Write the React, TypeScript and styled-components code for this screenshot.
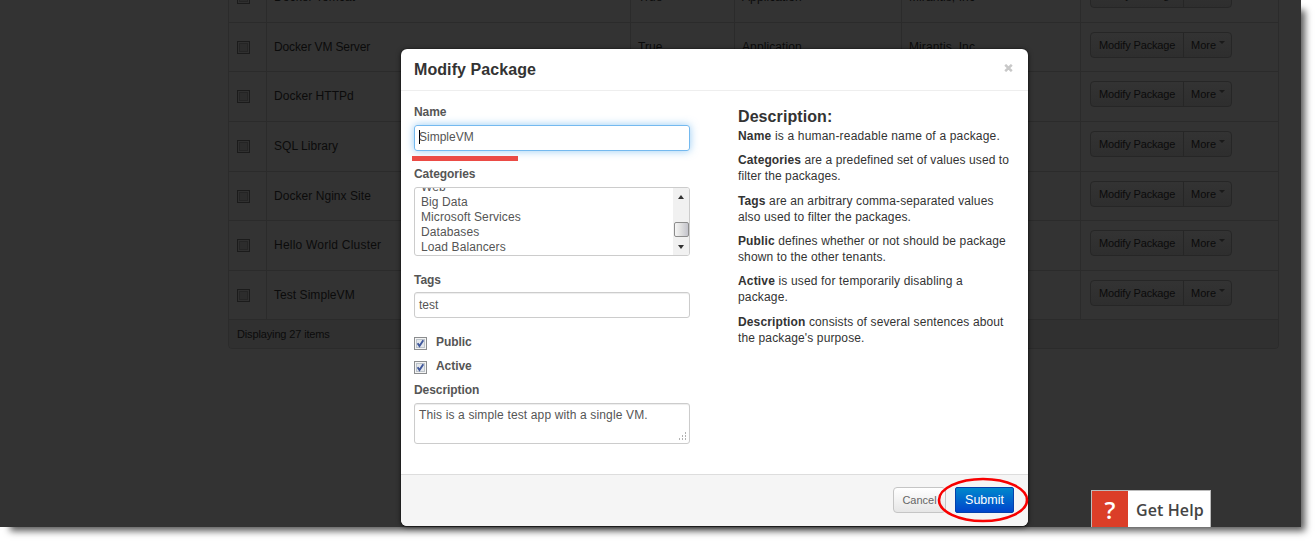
import React from 'react';
import styled, { createGlobalStyle } from 'styled-components';

const GlobalStyle = createGlobalStyle`
  * { box-sizing: border-box; }
  html, body { margin: 0; padding: 0; background: #fff; overflow: hidden; }
  body { font: 12px/16px "Liberation Sans", Arial, sans-serif; color: #333; }
  p, h3, h4 { margin: 0; }
`;

const Stage = styled.div`
  width: 1316px;
  height: 542px;
  overflow: hidden;
`;

const Page = styled.main`
  position: relative;
  width: 1301px;
  height: 527px;
  background: #333;
  box-shadow: 7px 7px 7px -3px rgba(0, 0, 0, 0.65);
`;

const Backdrop = styled.div`
  height: 527px;
  padding-left: 228px;
  overflow: hidden;
`;

const Table = styled.section`
  width: 1051px;
  margin-top: -28px;
  border: 1px solid #2b2b2b;
  border-radius: 4px;
  color: #0b0b0b;
  overflow: hidden;
`;

const Row = styled.div<{ $height: number }>`
  display: grid;
  grid-template-columns: 37px 364px 104px 167px 179px 1fr;
  height: ${(p) => p.$height}px;
  border-bottom: 1px solid #2b2b2b;
`;

const Cell = styled.div<{ $first?: boolean; $track?: number }>`
  padding: 15px 0 0 ${(p) => (p.$first ? 0 : 7)}px;
  border-left: ${(p) => (p.$first ? 0 : 1)}px solid #2b2b2b;
  line-height: 18px;
  letter-spacing: ${(p) => p.$track ?? 0.1}px;
  white-space: nowrap;
`;

const MutedBox = styled.span`
  display: block;
  width: 13px;
  height: 13px;
  margin: 3px 0 0 8px;
  border: 1px solid #1b1b1b;
  background: #2c2c2c;
  box-shadow: inset 0 0 0 1px #303030, inset 0 0 0 2px #252525;
`;

const Actions = styled.div`
  padding: 9px 0 0 9px;
  border-left: 1px solid #2b2b2b;
  font-size: 11px;
`;

const ButtonGroup = styled.div`
  display: flex;
  width: 142px;
  height: 26px;
  border: 1px solid #262626;
  border-radius: 4px;
  background: linear-gradient(#333, #2e2e2e);
  line-height: 25px;
  letter-spacing: -0.14px;
  white-space: nowrap;
`;

const GroupButton = styled.span<{ $width: number }>`
  display: flex;
  width: ${(p) => p.$width}px;
  padding-left: ${(p) => (p.$width > 60 ? 8 : 7)}px;
  & + & { border-left: 1px solid #262626; letter-spacing: 0; }
`;

const Caret = styled.i`
  width: 0;
  height: 0;
  margin: 8px 0 0 3px;
  border: 3px solid transparent;
  border-top-color: #191919;
  border-bottom: 0;
`;

const TableFooter = styled.div`
  height: 28px;
  padding-left: 8px;
  background: #303030;
  font-size: 11px;
  line-height: 28px;
  letter-spacing: -0.14px;
`;

const Modal = styled.section`
  position: absolute;
  left: 401px;
  top: 49px;
  display: flex;
  flex-direction: column;
  width: 627px;
  height: 477px;
  border-radius: 6px;
  background: #fff;
  box-shadow: 0 1px 5px rgba(0, 0, 0, 0.7), 0 0 1px #000;
`;

const ModalHeader = styled.header`
  display: flex;
  justify-content: space-between;
  height: 42px;
  padding: 11px 15px 0 13px;
  border-bottom: 1px solid #eee;
`;

const Title = styled.h3`
  font-size: 16px;
  line-height: 20px;
  letter-spacing: 0.08px;
`;

const CloseIcon = styled.svg`
  width: 9px;
  height: 8px;
  margin-top: 4px;
`;

const ModalBody = styled.div`
  display: flex;
  flex: 1;
  padding: 13px 0 0 13px;
`;

const Form = styled.div`
  flex: none;
  width: 276px;
  color: #555;
`;

const Label = styled.div`
  height: 16px;
  font-weight: bold;
  letter-spacing: -0.06px;
`;

const CategoriesLabel = styled(Label)`
  margin-top: 15px;
`;

const TextField = styled.div<{ $focused?: boolean }>`
  display: flex;
  align-items: center;
  height: 26px;
  margin-top: ${(p) => (p.$focused ? 5 : 4)}px;
  padding: 0 4px ${(p) => (p.$focused ? 2 : 0)}px;
  border: 1px solid ${(p) => (p.$focused ? '#74b9ef' : '#ccc')};
  border-radius: 3px;
  box-shadow: ${(p) => (p.$focused ? '0 0 8px rgba(82, 168, 236, 0.6)' : 'inset 0 1px 1px rgba(0, 0, 0, 0.075)')};
`;

const TextCursor = styled.i`
  width: 1px;
  height: 14px;
  margin-right: -1px;
  background: #000;
`;

const ListBox = styled.div`
  display: flex;
  height: 69px;
  margin: 5px 0 16px;
  border: 1px solid #ccc;
  border-radius: 3px;
  overflow: hidden;
`;

const Options = styled.div`
  flex: 1;
  padding-left: 6px;
  line-height: 15px;
  letter-spacing: 0.1px;
  & > div:first-child { margin-top: -8px; }
`;

const ScrollTrack = styled.div`
  display: flex;
  flex-direction: column;
  align-items: center;
  width: 16px;
  background: #f1f1f1;
`;

const ScrollArrow = styled.i<{ $down?: boolean }>`
  border: 3.5px solid transparent;
  ${(p) => (p.$down
    ? 'margin-top: 8px; border-top: 4px solid #333; border-bottom: 0;'
    : 'margin-top: 7px; border-bottom: 4px solid #333; border-top: 0;')}
`;

const ScrollThumb = styled.i`
  width: 15px;
  height: 15px;
  margin-top: 23px;
  border: 1px solid #8c8c8c;
  border-radius: 2px;
  background: linear-gradient(90deg, #f5f5f5, #e0e0e0 45%, #c4c4cc);
`;

const Checks = styled.div`
  margin-top: 16px;
`;

const CheckRow = styled.div`
  display: flex;
  height: 24px;
  gap: 9px;
`;

const CheckIcon = styled.svg`
  width: 13px;
  height: 13px;
  margin-top: 3px;
`;

const TextArea = styled.div`
  display: flex;
  justify-content: space-between;
  height: 41px;
  margin-top: 5px;
  padding: 3px 2px 2px 4px;
  border: 1px solid #ccc;
  border-radius: 3px;
  box-shadow: inset 0 1px 1px rgba(0, 0, 0, 0.075);
  letter-spacing: 0.14px;
`;

const Grip = styled.svg`
  width: 9px;
  height: 9px;
  align-self: flex-end;
`;

const Help = styled.div`
  width: 280px;
  margin-left: 48px;
  padding-top: 3px;
`;

const HelpTitle = styled.h4`
  margin-bottom: 1px;
  font-size: 16px;
  line-height: 20px;
  letter-spacing: 0.08px;
`;

const HelpText = styled.p<{ $track: number }>`
  margin-bottom: 8.33px;
  letter-spacing: ${(p) => p.$track}px;
  white-space: nowrap;
`;

const ModalFooter = styled.footer`
  display: flex;
  justify-content: flex-end;
  gap: 9px;
  height: 52px;
  padding: 12px 14px 0;
  border-top: 1px solid #ddd;
  border-radius: 0 0 6px 6px;
  background: #f5f5f5;
`;

const Button = styled.button<{ $primary?: boolean }>`
  width: ${(p) => (p.$primary ? 59 : 53)}px;
  height: 26px;
  padding: 0 0 ${(p) => (p.$primary ? 0 : 1)}px;
  border: 1px solid ${(p) => (p.$primary ? '#0340ab' : '#c5c5c5')};
  border-radius: ${(p) => (p.$primary ? 2 : 4)}px;
  background: ${(p) => (p.$primary ? 'linear-gradient(#0088cc, #0044cc)' : 'linear-gradient(#fff, #e6e6e6)')};
  color: ${(p) => (p.$primary ? '#fff' : '#666')};
  font: ${(p) => (p.$primary ? 12.5 : 11)}px/22px "Liberation Sans", Arial, sans-serif;
`;

const Underline = styled.i`
  position: absolute;
  left: 412px;
  top: 156px;
  width: 106px;
  height: 5px;
  background: #eb4b45;
`;

const Ellipse = styled.svg`
  position: absolute;
  left: 936px;
  top: 476px;
  width: 94px;
  height: 48px;
`;

const GetHelp = styled.div`
  position: absolute;
  left: 1091px;
  top: 490px;
  display: flex;
  width: 120px;
  height: 37px;
  border: 1px solid #bbb;
  border-bottom: 0;
  background: #fff;
  color: #444;
  font: 600 16px/39px "Open Sans", sans-serif;
  letter-spacing: 0.1px;
`;

const QuestionMark = styled.span`
  width: 36px;
  height: 36px;
  margin-right: 8px;
  background: #db3e28;
  color: #fff;
  font-size: 24px;
  line-height: 37px;
  text-align: center;
`;

const rows = [
  { name: 'Docker Tomcat', height: 50, track: 0.1 },
  { name: 'Docker VM Server', height: 49, track: -0.12 },
  { name: 'Docker HTTPd', height: 50, track: 0.04 },
  { name: 'SQL Library', height: 50, track: 0.05 },
  { name: 'Docker Nginx Site', height: 49, track: 0.05 },
  { name: 'Hello World Cluster', height: 50, track: 0.22 },
  { name: 'Test SimpleVM', height: 49, track: 0.05 },
];

const categories = ['Web', 'Big Data', 'Microsoft Services', 'Databases', 'Load Balancers'];

const Checked = () => (
  <CheckIcon viewBox="0 0 13 13">
    <rect x=".5" y=".5" width="12" height="12" fill="#f4f4f4" stroke="#8b8d8f" />
    <rect x="2.5" y="2.5" width="8" height="8" fill="#e4e7eb" stroke="#bcc3ca" />
    <path d="M3.6 6.2 5.5 9 9.3 3.2" fill="none" stroke="#40589c" strokeWidth="1.9" />
  </CheckIcon>
);

export default function App() {
  return (
    <Stage>
      <GlobalStyle />
      <Page>
        <Backdrop>
          <Table>
            {rows.map((row) => (
              <Row key={row.name} $height={row.height}>
                <Cell $first><MutedBox /></Cell>
                <Cell $track={row.track}>{row.name}</Cell>
                <Cell>True</Cell>
                <Cell>Application</Cell>
                <Cell>Mirantis, Inc</Cell>
                <Actions>
                  <ButtonGroup>
                    <GroupButton $width={92}>Modify Package</GroupButton>
                    <GroupButton $width={48}>More<Caret /></GroupButton>
                  </ButtonGroup>
                </Actions>
              </Row>
            ))}
            <TableFooter>Displaying 27 items</TableFooter>
          </Table>
        </Backdrop>

        <Modal role="dialog">
          <ModalHeader>
            <Title>Modify Package</Title>
            <CloseIcon viewBox="0 0 9 8">
              <path d="M1.2.8 7.8 7.2M7.8.8 1.2 7.2" stroke="#c8c8c8" strokeWidth="2.5" />
            </CloseIcon>
          </ModalHeader>
          <ModalBody>
            <Form>
              <Label>Name</Label>
              <TextField $focused><TextCursor />SimpleVM</TextField>
              <CategoriesLabel>Categories</CategoriesLabel>
              <ListBox>
                <Options>
                  {categories.map((c) => <div key={c}>{c}</div>)}
                </Options>
                <ScrollTrack>
                  <ScrollArrow />
                  <ScrollThumb />
                  <ScrollArrow $down />
                </ScrollTrack>
              </ListBox>
              <Label>Tags</Label>
              <TextField>test</TextField>
              <Checks>
                <CheckRow><Checked /><Label>Public</Label></CheckRow>
                <CheckRow><Checked /><Label>Active</Label></CheckRow>
              </Checks>
              <Label>Description</Label>
              <TextArea>
                <span>This is a simple test app with a single VM.</span>
                <Grip viewBox="0 0 9 9">
                  <path d="M7 1h1M4 4h1M7 4h1M1 7h1M4 7h1M7 7h1" stroke="#999" strokeWidth="1.4" />
                </Grip>
              </TextArea>
            </Form>
            <Help>
              <HelpTitle>Description:</HelpTitle>
              <HelpText $track={0.18}><b>Name</b> is a human-readable name of a package.</HelpText>
              <HelpText $track={0.1}><b>Categories</b> are a predefined set of values used to<br />filter the packages.</HelpText>
              <HelpText $track={0.13}><b>Tags</b> are an arbitrary comma-separated values<br />also used to filter the packages.</HelpText>
              <HelpText $track={0.12}><b>Public</b> defines whether or not should be package<br />shown to the other tenants.</HelpText>
              <HelpText $track={0.16}><b>Active</b> is used for temporarily disabling a<br />package.</HelpText>
              <HelpText $track={0.13}><b>Description</b> consists of several sentences about<br />the package's purpose.</HelpText>
            </Help>
          </ModalBody>
          <ModalFooter>
            <Button>Cancel</Button>
            <Button $primary>Submit</Button>
          </ModalFooter>
        </Modal>

        <Underline />
        <Ellipse viewBox="0 0 94 48">
          <ellipse cx="47" cy="24" rx="44" ry="21" fill="none" stroke="#f80000" strokeWidth="2.6" />
        </Ellipse>
        <GetHelp><QuestionMark>?</QuestionMark>Get Help</GetHelp>
      </Page>
    </Stage>
  );
}
